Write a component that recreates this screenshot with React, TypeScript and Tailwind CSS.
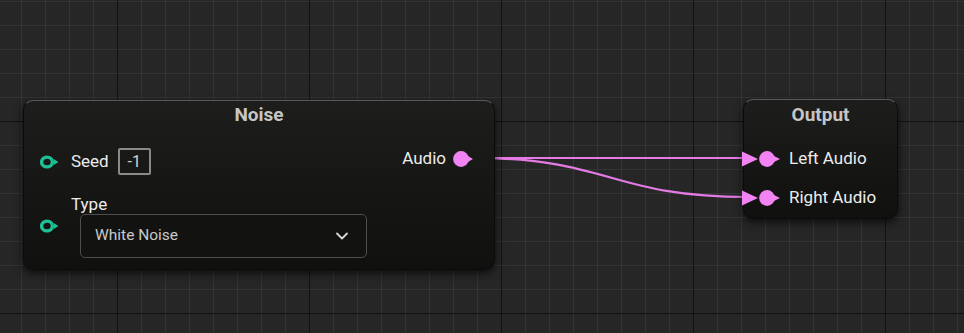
import React from "react"

const FONT = { fontFamily: "Roboto, 'Noto Sans', sans-serif" }

const ExecPin = () => (
  <svg width="19" height="14" viewBox="0 0 19 14" className="shrink-0">
    <ellipse cx="7" cy="7" rx="5.4" ry="4.9" fill="none" stroke="#1fbf94" strokeWidth="3.4" />
    <path d="M13.8 4 L18.4 7 L13.8 10 Z" fill="#1fbf94" />
  </svg>
)

const AudioOutPin = () => (
  <svg width="22" height="18" viewBox="0 0 22 18" className="shrink-0">
    <circle cx="8" cy="9" r="7.9" fill="#f283f2" />
    <path d="M14.5 5.8 L20 9 L14.5 12.2 Z" fill="#f283f2" />
  </svg>
)

const AudioInPin = () => (
  <svg width="40" height="18" viewBox="0 0 40 18" className="shrink-0">
    <path d="M0 1.5 L16 9 L0 16.5 Z" fill="#f283f2" />
    <circle cx="25" cy="9" r="7.9" fill="#f283f2" />
    <path d="M31.5 5.8 L38 9 L31.5 12.2 Z" fill="#f283f2" />
  </svg>
)

const Chevron = () => (
  <svg width="16" height="16" viewBox="0 0 16 16" fill="none">
    <path d="M3 5.5 L8 10.5 L13 5.5" stroke="#d8d8d8" strokeWidth="1.8" strokeLinecap="round" strokeLinejoin="round" />
  </svg>
)

const nodeShell =
  "absolute rounded-[10px] border border-[#0b0b0b] border-t-[#585858] bg-gradient-to-b from-[#1d1e1c] to-[#10110f] shadow-[0_3px_8px_rgba(0,0,0,0.7)]"

export default function App() {
  return (
    <div
      className="relative w-[964px] h-[333px] overflow-hidden bg-[#262626] [background-image:linear-gradient(to_right,#121212_1px,transparent_1px),linear-gradient(to_bottom,#121212_1px,transparent_1px),linear-gradient(to_right,#343434_1px,transparent_1px),linear-gradient(to_bottom,#343434_1px,transparent_1px)] [background-size:192px_192px,192px_192px,24px_24px,24px_24px] [background-position:117px_121px,117px_121px,21px_1px,21px_1px]"
      style={FONT}
    >
      {/* wires */}
      <svg className="absolute inset-0" width="964" height="333">
        <path d="M474 158 L748 158" stroke="#e47be4" strokeWidth="2.2" fill="none" />
        <path d="M474 158 C610 158 611 197 748 197" stroke="#e47be4" strokeWidth="2.2" fill="none" />
      </svg>

      {/* Noise node */}
      <div className={`${nodeShell} left-[23px] top-[100px] w-[472px] h-[170px]`}>
        <div className="h-[28px] flex items-center justify-center text-[19px] font-bold text-[#c6c6c6]">Noise</div>

        <div className="mt-[19px] pl-[16px] pr-[19px] h-[27px] flex items-center justify-between">
          <div className="flex items-center">
            <ExecPin />
            <span className="ml-[12px] text-[17px] text-[#ececec]">Seed</span>
            <span className="ml-[9px] h-[27px] w-[33px] flex items-center justify-center rounded-[2px] border-2 border-[#8a8a8a] text-[16px] text-[#d2d2d2]">
              -1
            </span>
          </div>
          <div className="flex items-center self-start mt-[1px] h-[20px]">
            <span className="mr-[7px] text-[17px] text-[#ececec]">Audio</span>
            <AudioOutPin />
          </div>
        </div>

        <div className="mt-[19px] pl-[16px] flex items-start">
          <div className="pt-[25px]">
            <ExecPin />
          </div>
          <div className="ml-[12px] flex flex-col">
            <span className="h-[20px] leading-[20px] text-[17px] text-[#ececec]">Type</span>
            <div className="ml-[9px] w-[287px] h-[44px] rounded-[5px] border border-[#4d4d4d] bg-[#121311] flex items-center justify-between pl-[14px] pr-[16px]">
              <span className="text-[15.5px] text-[#c9c9c9]">White Noise</span>
              <Chevron />
            </div>
          </div>
        </div>
      </div>

      {/* Output node */}
      <div className={`${nodeShell} left-[743px] top-[99px] w-[155px] h-[120px]`}>
        <div className="h-[30px] flex items-center justify-center text-[19px] font-bold text-[#c6c6c6]">Output</div>
        <div className="mt-[20px] flex flex-col gap-[21px]">
          <div className="flex items-center h-[18px] -ml-[2px]">
            <AudioInPin />
            <span className="ml-[7px] text-[17px] text-[#ececec]">Left Audio</span>
          </div>
          <div className="flex items-center h-[18px] -ml-[2px]">
            <AudioInPin />
            <span className="ml-[7px] text-[17px] text-[#ececec]">Right Audio</span>
          </div>
        </div>
      </div>
    </div>
  )
}
